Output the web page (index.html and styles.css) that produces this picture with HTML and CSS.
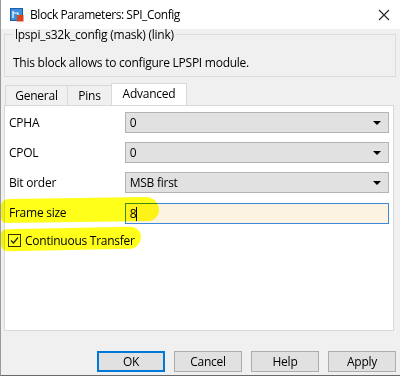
FILE: index.html
```html
<!DOCTYPE html>
<html lang="en">
<head>
<meta charset="UTF-8">
<title>Block Parameters: SPI_Config</title>
<link rel="stylesheet" href="styles.css">
</head>
<body>
<div class="window">
    <div class="titlebar">
        <svg class="app-icon" width="14" height="14" viewBox="0 0 14 14">
            <rect x="0.5" y="0.5" width="12" height="12" fill="#3d8ee0" stroke="#1e5ea8"/>
            <path d="M3 3 L3 10 M3 5 L8 5 L8 8" stroke="#fff" stroke-width="1.2" fill="none"/>
            <rect x="7" y="7" width="6.5" height="6.5" fill="#d9431e"/>
        </svg>
        <span class="title">Block Parameters: SPI_Config</span>
        <svg class="close" width="12" height="12" viewBox="0 0 12 12">
            <path d="M1 1 L11 11 M11 1 L1 11" stroke="#222" stroke-width="1.1"/>
        </svg>
    </div>

    <div class="body">
        <fieldset class="group">
            <legend>lpspi_s32k_config (mask) (link)</legend>
            <p>This block allows to configure LPSPI module.</p>
        </fieldset>

        <div class="tabs">
            <div class="tab tab-general">General</div>
            <div class="tab tab-pins">Pins</div>
            <div class="tab tab-advanced active">Advanced</div>
        </div>

        <div class="panel">
            <div class="row">
                <span class="label">CPHA</span>
                <div class="select">0<span class="arrow"></span></div>
            </div>
            <div class="row">
                <span class="label">CPOL</span>
                <div class="select">0<span class="arrow"></span></div>
            </div>
            <div class="row">
                <span class="label">Bit order</span>
                <div class="select">MSB first<span class="arrow"></span></div>
            </div>
            <div class="row">
                <span class="label">Frame size</span>
                <div class="input">8<span class="caret"></span></div>
            </div>
            <div class="check-row">
                <span class="checkbox">
                    <svg width="11" height="11" viewBox="0 0 11 11"><path d="M2 5.5 L4.5 8 L9 2.5" stroke="#222" stroke-width="1.2" fill="none"/></svg>
                </span>
                <span>Continuous Transfer</span>
            </div>

            <div class="mark mark-frame"></div>
            <div class="mark mark-check"></div>
        </div>

        <div class="buttons">
            <button class="default">OK</button>
            <button>Cancel</button>
            <button>Help</button>
            <button>Apply</button>
        </div>
    </div>
</div>
</body>
</html>
```

FILE: styles.css
```css
/* Dialog window */
body {
    margin: 0;
    padding: 0;
    font-family: "Open Sans", "Noto Sans", sans-serif;
    font-size: 12px;
    letter-spacing: -0.25px;
    color: #000;
    background-color: #f0f0f0;
}
.window {
    width: 399px;
    height: 375px;
    border-left: 1px solid #9a9a9a;
    border-bottom: 1px solid #6a6a6a;
    background-color: #f0f0f0;
}
.titlebar {
    height: 29px;
    background-color: #fff;
    display: flex;
    align-items: center;
    padding-left: 9px;
    padding-right: 9px;
}
.app-icon {
    margin-right: 6px;
}
.title {
    flex: 1;
    font-size: 12px;
    letter-spacing: -0.45px;
}
.close {
    margin-right: 1px;
}
.body {
    padding: 0 4px 0 3px;
}

/* Group box */
.group {
    margin: -3px 0 0 0;
    padding: 0 8px 5px 8px;
    border: 1px solid #dcdcdc;
    height: 44px;
}
.group legend {
    padding: 0 2px;
    margin-left: 0;
    line-height: 17px;
}
.group p {
    margin: 11px 0 0 0;
}

/* Tabs */
.tabs {
    display: flex;
    margin-top: 7px;
    height: 21px;
    align-items: flex-end;
    padding-left: 1px;
}
.tab {
    height: 20px;
    line-height: 19px;
    text-align: center;
    border: 1px solid #d9d9d9;
    border-bottom: none;
    margin-right: -1px;
    box-sizing: border-box;
}
.tab-general {
    width: 63px;
}
.tab-pins {
    width: 45px;
}
.tab-advanced {
    width: 76px;
}
.tab.active {
    height: 23px;
    background-color: #fff;
    margin-bottom: -1px;
    position: relative;
}
.panel {
    position: relative;
    background-color: #fff;
    border: 1px solid #d9d9d9;
    width: 390px;
    height: 226px;
    box-sizing: border-box;
    padding: 6px 4px 0 4px;
}

/* Parameter rows */
.row {
    display: flex;
    align-items: center;
    height: 21px;
    margin-bottom: 9px;
    position: relative;
    z-index: 1;
}
.label {
    width: 116px;
}
.select,
.input {
    width: 265px;
    height: 21px;
    box-sizing: border-box;
    line-height: 19px;
    padding-left: 4px;
    position: relative;
}
.select {
    background-color: #e1e1e1;
    border: 1px solid #b4b4b4;
}
.arrow {
    position: absolute;
    right: 7px;
    top: 8px;
    border-left: 4px solid transparent;
    border-right: 4px solid transparent;
    border-top: 4px solid #000;
}
.input {
    background-color: #fdf3e2;
    border: 1px solid #3b8ad9;
    margin-top: 1px;
}
.caret {
    display: inline-block;
    width: 1px;
    height: 14px;
    background-color: #000;
    vertical-align: -3px;
}
.check-row {
    display: flex;
    align-items: center;
    gap: 4px;
    margin-top: 0;
    margin-left: -1px;
    position: relative;
    z-index: 1;
}
.checkbox {
    width: 11px;
    height: 11px;
    border: 1px solid #333;
    background-color: transparent;
    display: flex;
}

/* Yellow marker strokes */
.mark {
    position: absolute;
    background-color: #ffff1a;
    mix-blend-mode: multiply;
    z-index: 2;
}
.mark-frame {
    left: -4px;
    top: 92px;
    width: 158px;
    height: 24px;
    border-radius: 8px 14px 12px 6px;
    transform: rotate(-0.8deg);
}
.mark-check {
    left: -4px;
    top: 122px;
    width: 140px;
    height: 22px;
    border-radius: 6px 12px 14px 8px;
    transform: rotate(-1.2deg);
}

/* Buttons */
.buttons {
    display: flex;
    justify-content: flex-end;
    gap: 9px;
    margin-top: 20px;
    padding-right: 0;
}
button {
    width: 68px;
    height: 21px;
    font-family: "Open Sans", "Noto Sans", sans-serif;
    font-size: 12px;
    letter-spacing: -0.25px;
    background-color: #e1e1e1;
    border: 1px solid #adadad;
    padding: 0;
}
button.default {
    border: 2px solid #0078d7;
}
```
